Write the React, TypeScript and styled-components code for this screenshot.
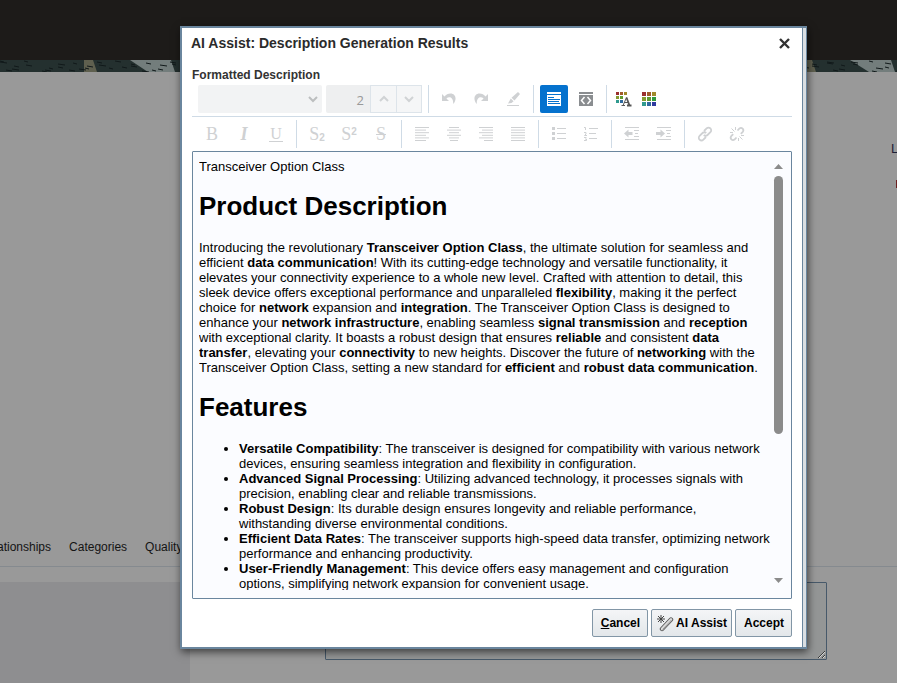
import React from "react";
import styled, { createGlobalStyle, css } from "styled-components";

const steel = "#6a869e";

const GlobalStyle = createGlobalStyle`
  * { box-sizing: border-box; }
  html, body, #root { height: 100%; }
  body { margin: 0; overflow: hidden; background: #999; color: #000; font: 12px/15px "Liberation Sans", Arial, sans-serif; }
  button, input, select, textarea { font: inherit; margin: 0; }
`;

const Page = styled.div`
  min-height: 100vh;
  display: flex;
  flex-direction: column;
`;
const Header = styled.header`
  height: 60px;
  background: #1d1b19;
`;
const Strip = styled.div`
  height: 12px;
  overflow: hidden;
  background: #24302f;
  svg { display: block; }
`;
const Record = styled.section`
  height: 468px;
  display: flex;
  flex-direction: column;
  align-items: flex-end;
  gap: 24px;
  padding-top: 69px;
  overflow: hidden;
`;
const EdgeText = styled.span`
  width: 6px;
  overflow: hidden;
  white-space: nowrap;
  font-size: 13px;
  color: #1d2038;
`;
const EdgeMark = styled.span`
  width: 1px;
  height: 8px;
  background: #6b1f1f;
`;
const Tabs = styled.nav`
  display: flex;
  gap: 18px;
  margin-left: -21px;
  padding-bottom: 11px;
  border-bottom: 1px solid #858a8f;
  a { color: #141414; text-decoration: none; }
`;
const Lower = styled.div`
  flex: 1;
  display: flex;
  margin-top: 15px;
`;
const Side = styled.aside`
  width: 190px;
  background: #8e8e90;
`;
const Notes = styled.textarea`
  flex: 1;
  height: 78px;
  margin: 0 70px 0 135px;
  border: 1px solid #47596a;
  border-radius: 1px;
  background: #949696;
  resize: both;
`;

const Overlay = styled.div`
  position: fixed;
  inset: 0;
  display: flex;
  padding: 26px 90px 34px 180px;
`;
const Dialog = styled.section`
  flex: 1;
  min-width: 0;
  display: flex;
  padding-right: 3px;
  border: 2px solid ${steel};
  border-right-width: 1px;
  background: #d9dee2;
  box-shadow: 1px 3px 8px rgba(0, 0, 0, 0.6);
`;
const Body = styled.div`
  flex: 1;
  min-width: 0;
  display: flex;
  flex-direction: column;
  padding: 7px 10px 10px;
  border-right: 1px solid ${steel};
  background: #fff;
`;
const TitleBar = styled.div`
  display: flex;
  align-items: center;
  justify-content: space-between;
  height: 16px;
`;
const Title = styled.h2`
  margin: 0 0 0 -1px;
  font-size: 14px;
  line-height: 16px;
  color: #2b2b2b;
`;
const Close = styled.button`
  display: flex;
  padding: 2px;
  border: 0;
  background: none;
`;
const Label = styled.h3`
  margin: 17px 0 2px;
  font-size: 12px;
  line-height: 15px;
  color: #333;
`;
const Tools = styled.div`
  display: flex;
  align-items: center;
  gap: 4px;
  height: 28px;
  padding-left: 6px;
`;
const Rule = styled.div`
  height: 1px;
  margin: 3px 0;
  background: #cfdbe6;
`;
const Divider = styled.span`
  width: 1px;
  height: 28px;
  margin: 0 2px;
  background: #cfdbe6;
`;
const Tool = styled.button<{ $on?: boolean; $slim?: boolean }>`
  width: ${(p) => (p.$slim ? 21 : 28)}px;
  height: 28px;
  display: flex;
  align-items: center;
  justify-content: center;
  padding: 0;
  border: 0;
  border-radius: 2px;
  color: #cfd1d3;
  background: ${(p) => (p.$on ? "#0572ce" : "none")};
`;
const SelectWrap = styled.span`
  display: grid;
  align-items: center;
  width: 124px;
  > * { grid-area: 1 / 1; }
  svg { z-index: 1; justify-self: end; margin-right: 4px; pointer-events: none; }
`;
const FontSelect = styled.select`
  appearance: none;
  height: 28px;
  border: 0;
  border-radius: 2px;
  background: #f2f3f4;
  &:disabled { opacity: 1; }
`;
const Spin = styled.span`
  display: flex;
  width: 96px;
  height: 28px;
`;
const SpinInput = styled.input`
  flex: 1;
  min-width: 0;
  padding: 2px 6px 0 0;
  border: 0;
  border-radius: 2px 0 0 2px;
  background: #eeeff0;
  color: #999;
  font-family: "Open Sans", sans-serif;
  font-size: 13px;
  text-align: right;
`;
const SpinButton = styled.button`
  width: 26px;
  padding: 0;
  border: 1px solid #dde4ea;
  border-right-width: 0;
  background: #f5f6f7;
  display: flex;
  align-items: center;
  justify-content: center;
  &:last-child { border-right-width: 1px; }
`;
const Editor = styled.div`
  flex: 1;
  min-height: 0;
  display: flex;
  margin-top: 3px;
  padding: 7px 5px 8px 6px;
  border: 1px solid ${steel};
  border-radius: 1px;
  background: #fbfcff;
`;
const Article = styled.article`
  flex: 1;
  min-width: 0;
  overflow: hidden;
  font-size: 13px;
  line-height: 15px;
  h1 { margin: 17px 0 18px; font-size: 26px; line-height: 31px; }
  p { margin: 0; }
  ul { margin: 0; padding-left: 40px; }
`;
const Scroll = styled.div`
  width: 15px;
  display: flex;
  flex-direction: column;
  align-items: center;
  padding: 5px 0 7px;
`;
const Thumb = styled.div`
  width: 9px;
  height: 258px;
  margin: 7px 0 auto;
  border-radius: 5px;
  background: #8b8b8b;
`;
const Footer = styled.footer`
  display: flex;
  justify-content: flex-end;
  gap: 3px;
  margin-top: 10px;
`;
const Action = styled.button`
  display: flex;
  align-items: center;
  gap: 2px;
  height: 28px;
  padding: 0 7px 0 8px;
  border: 1px solid #8296a6;
  border-radius: 2px;
  background: linear-gradient(#f4f5f7, #e3e7ea);
  color: #000;
  font-weight: bold;
`;
const IconAction = styled(Action)`
  padding: 0 4px;
`;

const Svg = ({ w = 16, h = 16, children }: { w?: number; h?: number; children: React.ReactNode }) => (
  <svg width={w} height={h} viewBox={`0 0 ${w} ${h}`} fill="none" stroke="currentColor" aria-hidden="true">
    {children}
  </svg>
);

const Glyph = styled.span<{ $kind?: "italic" | "under" | "strike" }>`
  font-family: "Liberation Serif", serif;
  font-size: 18px;
  line-height: 20px;
  ${(p) => p.$kind === "italic" && css`font-style: italic; font-weight: bold;`}
  ${(p) => p.$kind === "under" && css`font-size: 16px; line-height: 14px; border-bottom: 1px solid; padding: 0 1px;`}
  ${(p) => p.$kind === "strike" && css`text-decoration: line-through 1px;`}
  sub, sup { font-family: "Liberation Sans", sans-serif; font-size: 10px; font-weight: bold; line-height: 0; }
  sub { vertical-align: -1px; }
  sup { vertical-align: 5px; }
`;

const Chevron = ({ up, dark }: { up?: boolean; dark?: boolean }) => (
  <svg width="10" height="8" viewBox="0 0 10 8" fill="none" stroke={dark ? "#bcbebf" : "#d0d3d5"} strokeWidth="2" aria-hidden="true">
    <path d={up ? "M1 6L5 2L9 6" : "M1 2L5 6L9 2"} />
  </svg>
);

const rowsFor = {
  left: [[0, 14], [0, 11], [0, 14], [0, 11], [0, 14], [0, 11]],
  center: [[2, 12], [0, 14], [2, 12], [0, 14], [2, 12], [3, 11]],
  right: [[0, 14], [3, 14], [0, 14], [3, 14], [0, 14], [5, 14]],
  full: [[0, 14], [0, 14], [0, 14], [0, 14], [0, 14], [0, 14]],
};
const Align = ({ kind }: { kind: keyof typeof rowsFor }) => (
  <Svg w={14} h={16}>
    {rowsFor[kind].map(([a, b], i) => (
      <path key={i} d={`M${a} ${1.5 + i * 2.6}H${b}`} strokeWidth="1" />
    ))}
  </Svg>
);

const Undo = ({ flip }: { flip?: boolean }) => (
  <Svg>
    <g transform={flip ? "matrix(-1 0 0 1 16 0)" : undefined} stroke="none" fill="currentColor">
      <path d="M1 3V10H8L5.4 7.6C8 5 12.5 6 12.2 13C16.5 8 14.5 2.5 9.5 2.5C7 2.5 5 3.8 3.5 5.4Z" />
    </g>
  </Svg>
);
const Indent = ({ out }: { out?: boolean }) => (
  <Svg>
    <path d="M1 1.5H15M1 13.5H15M10 4.5H15M11 7.5H14M10 10.5H15" />
    <path stroke="none" fill="currentColor" d={out ? "M0 7.5L4.5 3.5V6H8.5V9H4.5V11.5Z" : "M9 7.5L4.5 3.5V6H0V9H4.5V11.5Z"} />
  </Svg>
);
const Chain = ({ broken }: { broken?: boolean }) => (
  <Svg>
    {broken ? (
      <>
        <path strokeWidth="1.8" d="M8.5 4.5L10.5 2.4A2.4 2.4 0 0 1 13.8 5.8L11.8 7.8M7.5 11.5L5.5 13.6A2.4 2.4 0 0 1 2.2 10.2L4.2 8.2" />
        <path d="M2.5 2.5L5.5 5.5M6.5 1V4M1 6.5H4M10.5 10.5L13.5 13.5M9.5 12V15M12 9.5H15" />
      </>
    ) : (
      <path strokeWidth="1.8" d="M7 5L9.6 2.4A2.6 2.6 0 0 1 13.4 6.2L10.5 9A2.6 2.6 0 0 1 6.8 9M9 11L6.4 13.6A2.6 2.6 0 0 1 2.6 9.8L5.5 7A2.6 2.6 0 0 1 9.2 7" />
    )}
  </Svg>
);
const palette = ["#9b2f2f", "#a05a2b", "#a08a2b", "#859a2f", "#5f9a2f", "#2f9a3d", "#2f9a8f", "#2f6a9f", "#2f3a9f"];
const Grid = () => (
  <Svg w={14} h={14}>
    {palette.map((c, i) => (
      <rect key={c} x={(i % 3) * 5} y={Math.floor(i / 3) * 5} width="4" height="4" fill={c} stroke="none" />
    ))}
  </Svg>
);
const InkColor = () => (
  <Svg>
    {palette.slice(0, 8).filter((_, i) => i !== 5).map((c, i) => (
      <rect key={c} x={(i < 3 ? i : i < 5 ? i - 3 : i - 5) * 4} y={(i < 3 ? 0 : i < 5 ? 1 : 2) * 4 + 1} width="3" height="3" fill={c} stroke="none" />
    ))}
    <path d="M5.5 14.5H9M7 14.5L10.5 6.5M8.2 11.5H12.5" stroke="#555" />
    <path d="M10.5 6.5L13.5 14.5M11 14.5H15.5" stroke="#555" strokeWidth="1.8" />
  </Svg>
);

const features = [
  ["Versatile Compatibility", ": The transceiver is designed for compatibility with various network devices, ensuring seamless integration and flexibility in configuration."],
  ["Advanced Signal Processing", ": Utilizing advanced technology, it processes signals with precision, enabling clear and reliable transmissions."],
  ["Robust Design", ": Its durable design ensures longevity and reliable performance, withstanding diverse environmental conditions."],
  ["Efficient Data Rates", ": The transceiver supports high-speed data transfer, optimizing network performance and enhancing productivity."],
  ["User-Friendly Management", ": This device offers easy management and configuration options, simplifying network expansion for convenient usage."],
];

const hatch = Array.from({ length: 150 }, (_, i) => ({
  x: (i * 157 + ((i * i) % 11)) % 900,
  y: 1 + ((i * 7 + ((i * i) % 3)) % 11),
  w: 4 + (i % 4),
}));

export default function App() {
  return (
    <>
      <GlobalStyle />
      <Page>
        <Header />
        <Strip>
          <svg width="100%" height="12" viewBox="0 0 897 12" preserveAspectRatio="xMinYMin slice" aria-hidden="true">
            <path d="M84 0H93L97 12H84Z" fill="#5f604f" />
            <path d="M130 0H171L175 12H148Z" fill="#737d7c" />
            <path d="M807 0H812L816 12H807Z" fill="#5f604f" />
            <path d="M850 0H891L895 12H869Z" fill="#737d7c" />
            {hatch.map((h, i) => (
              <path key={i} d={`M${h.x} ${h.y}l${h.w} 1`} stroke="#11191a" />
            ))}
          </svg>
        </Strip>
        <Record>
          <EdgeText>L</EdgeText>
          <EdgeMark />
        </Record>
        <Tabs>
          <a href="#relationships">Relationships</a>
          <a href="#categories">Categories</a>
          <a href="#quality">Quality</a>
        </Tabs>
        <Lower>
          <Side />
          <Notes aria-label="Description" />
        </Lower>
      </Page>
      <Overlay>
        <Dialog role="dialog" aria-labelledby="dialog-title">
          <Body>
            <TitleBar>
              <Title id="dialog-title">AI Assist: Description Generation Results</Title>
              <Close aria-label="Close">
                <svg width="11" height="11" viewBox="0 0 11 11" stroke="#333" strokeWidth="2.4" aria-hidden="true">
                  <path d="M1 1L10 10M10 1L1 10" />
                </svg>
              </Close>
            </TitleBar>
            <Label>Formatted Description</Label>
            <Tools>
              <SelectWrap>
                <FontSelect aria-label="Font" disabled />
                <Chevron dark />
              </SelectWrap>
              <Spin>
                <SpinInput aria-label="Font size" defaultValue="2" disabled />
                <SpinButton aria-label="Increase size" disabled><Chevron up /></SpinButton>
                <SpinButton aria-label="Decrease size" disabled><Chevron /></SpinButton>
              </Spin>
              <Divider />
              <Tool aria-label="Undo"><Undo /></Tool>
              <Tool aria-label="Redo"><Undo flip /></Tool>
              <Tool aria-label="Clear formatting">
                <Svg>
                  <path d="M2 14.5H14" />
                  <path d="M13 1L15 3L9.5 9.5L6.5 6.8Z M5.8 7.6L8.6 10.2L6.5 12L3 12.5Z" fill="currentColor" stroke="none" />
                </Svg>
              </Tool>
              <Divider />
              <Tool $on aria-label="Rich text mode" aria-pressed="true">
                <Svg w={14} h={14}>
                  <path d="M0 0H14V2H0ZM0 3H14V14H0Z" fill="#fff" stroke="none" />
                  <path d="M1 5.5H7M1 7.5H13M1 9.5H12M1 11.5H13" stroke="#0572ce" />
                </Svg>
              </Tool>
              <Tool aria-label="Source mode">
                <Svg w={14} h={14}>
                  <path d="M0 0H14V2H0ZM0 3H14V14H0Z" fill="#8a8d90" stroke="none" />
                  <path d="M5.5 5L2.5 8.5L5.5 12M8.5 5L11.5 8.5L8.5 12" stroke="#fff" strokeWidth="1.5" />
                </Svg>
              </Tool>
              <Divider />
              <Tool $slim aria-label="Text color"><InkColor /></Tool>
              <Tool $slim aria-label="Background color"><Grid /></Tool>
            </Tools>
            <Rule />
            <Tools>
              <Tool aria-label="Bold"><Glyph>B</Glyph></Tool>
              <Tool aria-label="Italic"><Glyph $kind="italic">I</Glyph></Tool>
              <Tool aria-label="Underline"><Glyph $kind="under">U</Glyph></Tool>
              <Divider />
              <Tool aria-label="Subscript"><Glyph>S<sub>2</sub></Glyph></Tool>
              <Tool aria-label="Superscript"><Glyph>S<sup>2</sup></Glyph></Tool>
              <Tool aria-label="Strikethrough"><Glyph $kind="strike">S</Glyph></Tool>
              <Divider />
              <Tool aria-label="Align left"><Align kind="left" /></Tool>
              <Tool aria-label="Align center"><Align kind="center" /></Tool>
              <Tool aria-label="Align right"><Align kind="right" /></Tool>
              <Tool aria-label="Justify"><Align kind="full" /></Tool>
              <Divider />
              <Tool aria-label="Bulleted list">
                <Svg>
                  <path d="M6 2.5H15M6 7.5H15M6 12.5H15" />
                  <path d="M1 2.5H4M1 7.5H4M1 12.5H4" strokeWidth="3" />
                </Svg>
              </Tool>
              <Tool aria-label="Numbered list">
                <Svg>
                  <path d="M6 2.5H15M6 7.5H13M6 12.5H14" />
                  <path d="M1 1.5H2.5V4M1 6.5H3V8L1.5 9.5H4M1 11.5H3.5M2 13H3.5V14.5H1" />
                </Svg>
              </Tool>
              <Divider />
              <Tool aria-label="Outdent"><Indent out /></Tool>
              <Tool aria-label="Indent"><Indent /></Tool>
              <Divider />
              <Tool aria-label="Add link"><Chain /></Tool>
              <Tool aria-label="Remove link"><Chain broken /></Tool>
            </Tools>
            <Editor>
              <Article>
                <p>Transceiver Option Class</p>
                <h1>Product Description</h1>
                <p>
                  Introducing the revolutionary <b>Transceiver Option Class</b>, the ultimate solution for seamless and
                  efficient <b>data communication</b>! With its cutting-edge technology and versatile functionality, it
                  elevates your connectivity experience to a whole new level. Crafted with attention to detail, this
                  sleek device offers exceptional performance and unparalleled <b>flexibility</b>, making it the perfect
                  choice for <b>network</b> expansion and <b>integration</b>. The Transceiver Option Class is designed to
                  enhance your <b>network infrastructure</b>, enabling seamless <b>signal transmission</b> and{" "}
                  <b>reception</b> with exceptional clarity. It boasts a robust design that ensures <b>reliable</b> and
                  consistent <b>data transfer</b>, elevating your <b>connectivity</b> to new heights. Discover the future
                  of <b>networking</b> with the Transceiver Option Class, setting a new standard for <b>efficient</b> and{" "}
                  <b>robust data communication</b>.
                </p>
                <h1>Features</h1>
                <ul>
                  {features.map(([name, text]) => (
                    <li key={name}><b>{name}</b>{text}</li>
                  ))}
                </ul>
              </Article>
              <Scroll aria-hidden="true">
                <svg width="9" height="5" viewBox="0 0 9 5"><path d="M4.5 0L9 5H0Z" fill="#8b8b8b" /></svg>
                <Thumb />
                <svg width="9" height="5" viewBox="0 0 9 5"><path d="M4.5 5L9 0H0Z" fill="#8b8b8b" /></svg>
              </Scroll>
            </Editor>
            <Footer>
              <Action><span><u>C</u>ancel</span></Action>
              <IconAction>
                <Svg w={18} h={18}>
                  <path d="M5 1V9M1 5H9M2 2L8 8M8 2L2 8" stroke="#444" />
                  <path d="M6 15L15 5.5" stroke="#555" strokeWidth="4.4" strokeLinecap="round" />
                  <path d="M6 15L15 5.5" stroke="#ddd" strokeWidth="2.6" strokeLinecap="round" />
                  <path d="M6.5 15.5L15.5 6" stroke="#999" />
                </Svg>
                AI Assist
              </IconAction>
              <Action>Accept</Action>
            </Footer>
          </Body>
        </Dialog>
      </Overlay>
    </>
  );
}
